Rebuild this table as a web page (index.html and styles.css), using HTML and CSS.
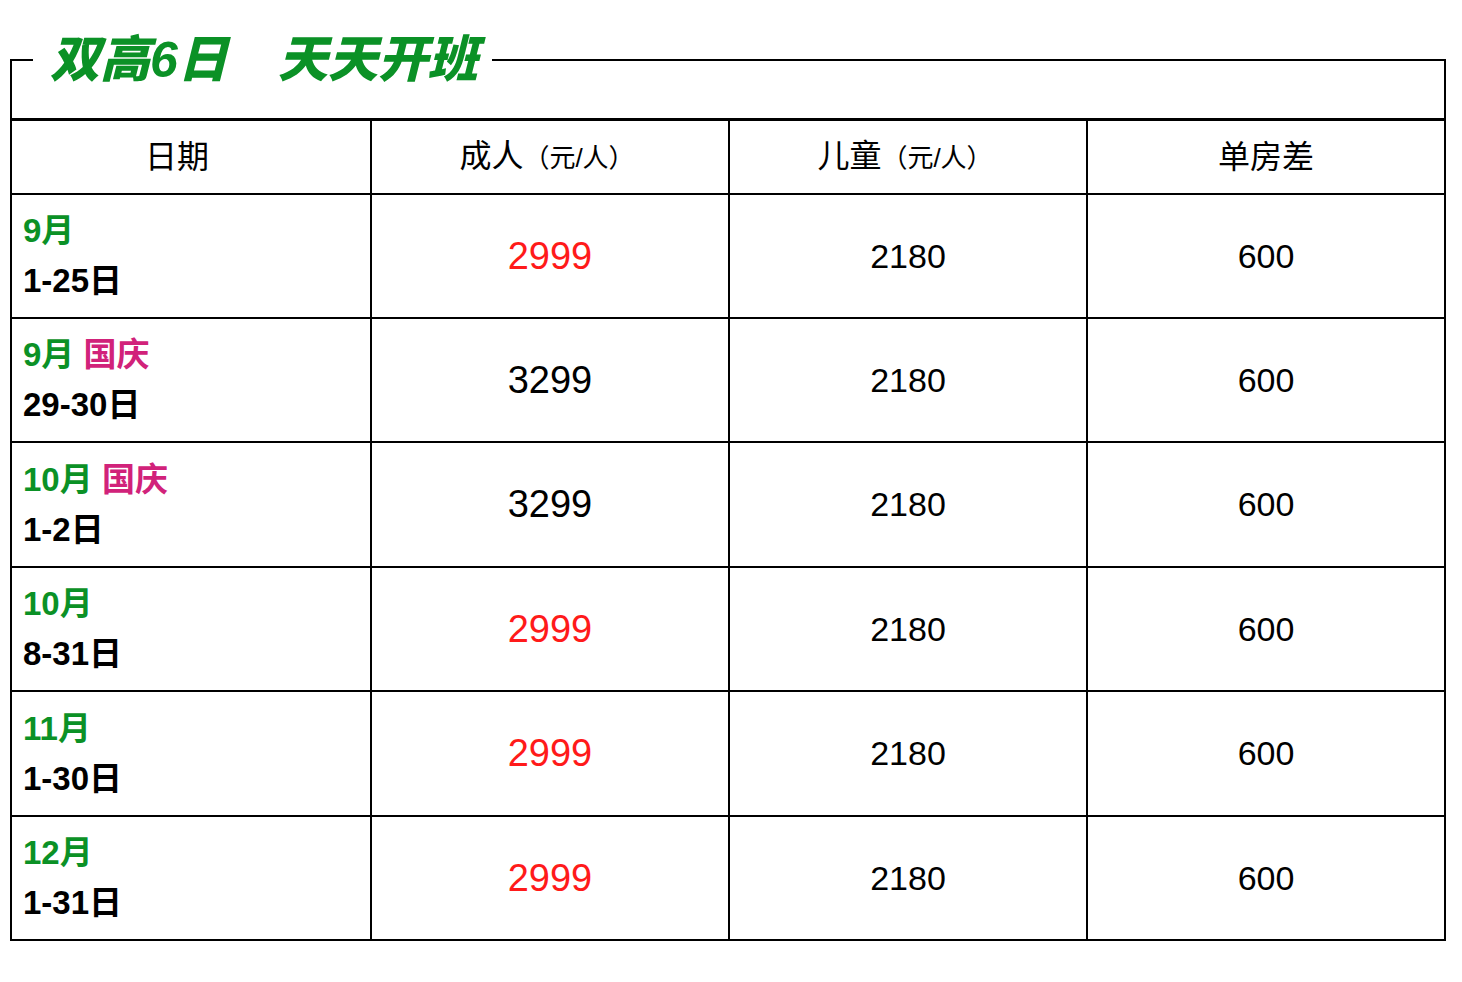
FILE: index.html
```html
<!DOCTYPE html>
<html lang="zh-CN">
<head>
<meta charset="utf-8">
<title>双高6日 天天开班</title>
<link rel="stylesheet" href="styles.css">
</head>
<body>
<div class="page">
  <fieldset class="schedule">
    <legend class="title">双高6日　天天开班</legend>
    <div class="spacer"></div>
    <table class="prices">
      <thead>
        <tr>
          <th class="h-date">日期</th>
          <th class="h-unit">成人<span class="unit">（元/人）</span></th>
          <th class="h-unit">儿童<span class="unit">（元/人）</span></th>
          <th>单房差</th>
        </tr>
      </thead>
      <tbody>
        <tr class="r124">
          <td class="date"><div class="month">9月</div><div class="days">1-25日</div></td>
          <td class="adult sale">2999</td>
          <td class="num">2180</td>
          <td class="num">600</td>
        </tr>
        <tr class="r124">
          <td class="date"><div class="month">9月 <span class="holiday">国庆</span></div><div class="days">29-30日</div></td>
          <td class="adult">3299</td>
          <td class="num">2180</td>
          <td class="num">600</td>
        </tr>
        <tr class="r125">
          <td class="date"><div class="month">10月 <span class="holiday">国庆</span></div><div class="days">1-2日</div></td>
          <td class="adult">3299</td>
          <td class="num">2180</td>
          <td class="num">600</td>
        </tr>
        <tr class="r124">
          <td class="date"><div class="month">10月</div><div class="days">8-31日</div></td>
          <td class="adult sale">2999</td>
          <td class="num">2180</td>
          <td class="num">600</td>
        </tr>
        <tr class="r125">
          <td class="date"><div class="month">11月</div><div class="days">1-30日</div></td>
          <td class="adult sale">2999</td>
          <td class="num">2180</td>
          <td class="num">600</td>
        </tr>
        <tr class="r124">
          <td class="date"><div class="month">12月</div><div class="days">1-31日</div></td>
          <td class="adult sale">2999</td>
          <td class="num">2180</td>
          <td class="num">600</td>
        </tr>
      </tbody>
    </table>
  </fieldset>
</div>
</body>
</html>
```

FILE: styles.css
```css
html, body {
  margin: 0;
  padding: 0;
  background: #fff;
}

body {
  font-family: "Liberation Sans", "Noto Sans CJK SC", sans-serif;
  color: #000;
}

.page {
  padding: 0 0 0 10px;
  width: 1436px;
}

.schedule {
  margin: 30px 0 0 0;
  padding: 0;
  border: 2px solid #000;
  min-width: 0;
}

.title {
  margin-left: 21px;
  padding: 0 14px 0 17px;
  font-size: 50px;
  line-height: 60px;
  height: 60px;
  font-weight: 900;
  font-style: italic;
  color: #0b9126;
  white-space: nowrap;
}

.spacer {
  height: 28px;
}

.prices {
  width: 100%;
  table-layout: fixed;
  border-collapse: separate;
  border-spacing: 0;
}

.prices th,
.prices td {
  box-sizing: border-box;
  width: 25%;
  padding: 0;
  border-left: 2px solid #000;
  vertical-align: middle;
  text-align: center;
}

.prices th:first-child,
.prices td:first-child {
  border-left: 0;
}

.prices th {
  height: 75px;
  border-top: 3px solid #000;
  font-size: 32px;
  font-weight: 400;
  line-height: 40px;
}

.prices th.h-date {
  padding-right: 28px;
}

.prices th.h-unit {
  padding-right: 6px;
}

.prices td {
  border-top: 2px solid #000;
}

.prices .unit {
  font-size: 26px;
}

.r124 td { height: 124px; }
.r125 td { height: 125px; }

.prices td.date {
  text-align: left;
  padding-left: 11px;
  font-size: 33px;
  font-weight: 700;
  line-height: 50px;
}

.month {
  color: #0b9126;
}

.holiday {
  color: #d1227a;
}

.days {
  color: #000;
}

.adult {
  font-size: 38px;
}

.sale {
  color: #ff1a1a;
}

.num {
  font-size: 34px;
}
```
